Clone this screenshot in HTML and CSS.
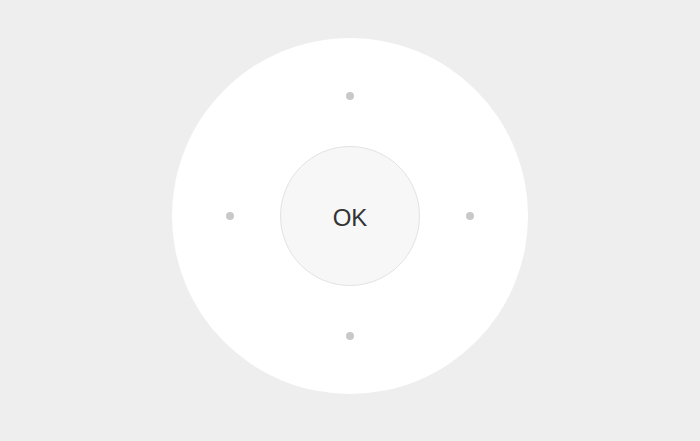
FILE: index.html
```html
<!DOCTYPE html>
<html lang="en">
<head>
    <meta charset="UTF-8">
    <meta name="viewport" content="width=device-width, initial-scale=1.0">
    <title>Remote</title>
    <link rel="stylesheet" href="styles.css">
</head>
<body>

    <div class="dpad">
        <button class="dir dir-up" aria-label="Up"><span class="dot"></span></button>
        <button class="dir dir-left" aria-label="Left"><span class="dot"></span></button>
        <button class="ok-btn">OK</button>
        <button class="dir dir-right" aria-label="Right"><span class="dot"></span></button>
        <button class="dir dir-down" aria-label="Down"><span class="dot"></span></button>
    </div>

</body>
</html>
```

FILE: styles.css
```css
body {
    font-family: 'Liberation Sans', Arial, sans-serif;
    background-color: #eeeeee;
    margin: 0;
    padding: 38px 0 0;
    display: flex;
    justify-content: center;
    height: 100vh;
    box-sizing: border-box;
}

.dpad {
    width: 356px;
    height: 356px;
    box-sizing: border-box;
    padding: 18px;
    border-radius: 50%;
    background-color: #fff;
    display: grid;
    grid-template-columns: 80px 1fr 80px;
    grid-template-rows: 80px 1fr 80px;
    grid-template-areas:
        ". up ."
        "left ok right"
        ". down .";
    place-items: center;
}

.dir {
    width: 40px;
    height: 40px;
    border: none;
    background: none;
    padding: 0;
    cursor: pointer;
    display: flex;
    justify-content: center;
    align-items: center;
}

.dir-up { grid-area: up; }
.dir-left { grid-area: left; }
.dir-right { grid-area: right; }
.dir-down { grid-area: down; }

.dot {
    width: 8px;
    height: 8px;
    border-radius: 50%;
    background-color: #c8c8c8;
}

.ok-btn {
    grid-area: ok;
    width: 140px;
    height: 140px;
    border-radius: 50%;
    border: 1px solid #e3e3e3;
    background-color: #f7f7f7;
    color: #333;
    font-family: inherit;
    font-size: 24px;
    padding: 4px 0 0;
    cursor: pointer;
}

.ok-btn:hover {
    background-color: #f0f0f0;
}
```
